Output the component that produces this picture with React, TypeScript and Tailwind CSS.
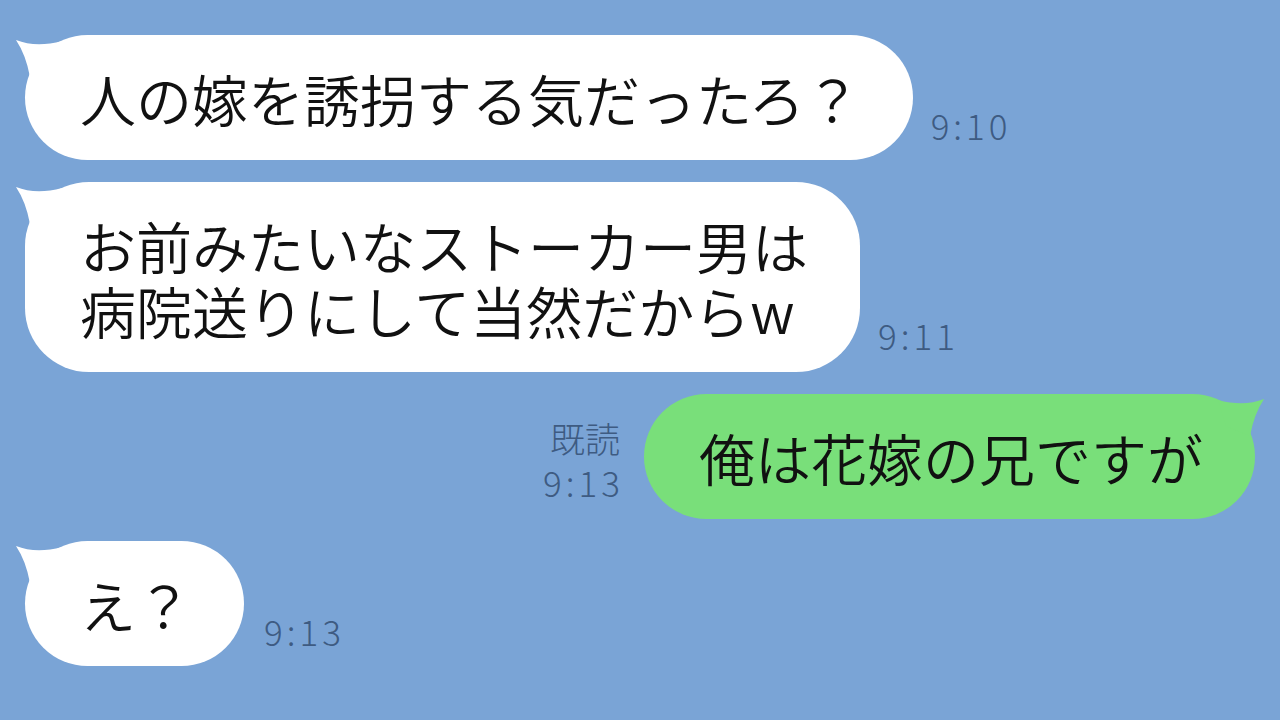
import React from "react";

const jp = { fontFamily: '"Noto Sans CJK JP", "Noto Sans", sans-serif' };

// tail drawn at the top corner of a bubble
const Tail = ({ side, color }: { side: "left" | "right"; color: string }) => (
  <svg
    width="50"
    height="50"
    viewBox="0 0 50 50"
    className={`absolute top-0 ${side === "left" ? "-left-[11px]" : "-right-[11px] -scale-x-100"}`}
  >
    <path d="M2 5 Q 22 13 48 6 L 40 32 L 16 42 Q 12 20 2 5 Z" fill={color} />
  </svg>
);

const Bubble = ({
  side,
  color,
  children,
}: {
  side: "left" | "right";
  color: string;
  children: React.ReactNode;
}) => (
  <div
    className="relative rounded-[64px] pl-[55px] pr-[52px] py-[30px] text-[56px] font-[350] leading-[65px] text-[#111] whitespace-nowrap"
    style={{ backgroundColor: color, ...jp }}
  >
    <Tail side={side} color={color} />
    <span className="relative">{children}</span>
  </div>
);

const Time = ({ children, className = "" }: { children: React.ReactNode; className?: string }) => (
  <div className={`text-[35px] font-light leading-[40px] text-[#3e5b82] tracking-[4px] ${className}`} style={jp}>
    {children}
  </div>
);

export default function App() {
  return (
    <div className="w-[1280px] h-[720px] overflow-hidden bg-[#7aa4d6] flex flex-col gap-[22px] pt-[35px]">
      <div className="flex items-end pl-[25px] gap-[18px]">
        <Bubble side="left" color="#ffffff">人の嫁を誘拐する気だったろ？</Bubble>
        <Time className="mb-[15px]">9:10</Time>
      </div>

      <div className="flex items-end pl-[25px] gap-[18px]">
        <Bubble side="left" color="#ffffff">
          お前みたいなストーカー男は
          <br />
          病院送りにして当然だからw
        </Bubble>
        <Time className="mb-[17px]">9:11</Time>
      </div>

      <div className="flex items-end justify-end pr-[25px] gap-[24px]">
        <div className="flex flex-col items-end gap-[4px] mb-[17px]">
          <Time className="text-[32px] tracking-normal">既読</Time>
          <Time className="-mr-[4px]">9:13</Time>
        </div>
        <Bubble side="right" color="#79df7a">俺は花嫁の兄ですが</Bubble>
      </div>

      <div className="flex items-end pl-[25px] gap-[20px]">
        <Bubble side="left" color="#ffffff">え？</Bubble>
        <Time className="mb-[15px]">9:13</Time>
      </div>
    </div>
  );
}
